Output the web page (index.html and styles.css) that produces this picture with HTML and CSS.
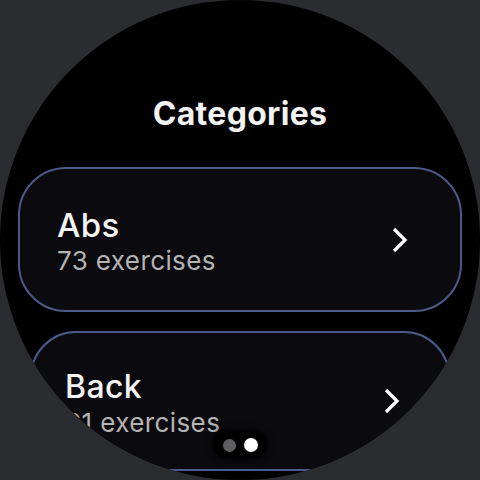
FILE: index.html
```html
<!DOCTYPE html>
<html>
<head>
<meta charset="utf-8">
<link rel="stylesheet" href="styles.css">
</head>
<body>
<div class="watch">
  <h1 class="title">Categories</h1>
  <div class="list">
    <div class="card card-main">
      <div class="text">
        <div class="name">Abs</div>
        <div class="count">73 exercises</div>
      </div>
      <svg class="chev" width="18" height="26" viewBox="0 0 18 26"><path d="M3 2 L14 13 L3 24" fill="none" stroke="#fff" stroke-width="3.2"/></svg>
    </div>
    <div class="card card-next">
      <div class="text">
        <div class="name">Back</div>
        <div class="count">61 exercises</div>
      </div>
      <svg class="chev" width="18" height="26" viewBox="0 0 18 26"><path d="M3 2 L14 13 L3 24" fill="none" stroke="#fff" stroke-width="3.2"/></svg>
    </div>
  </div>
  <div class="pager">
    <span class="dot"></span>
    <span class="dot active"></span>
  </div>
</div>
</body>
</html>
```

FILE: styles.css
```css
html, body {
  margin: 0;
  padding: 0;
  background: #2b2c30;
}
.watch {
  position: relative;
  width: 480px;
  height: 480px;
  border-radius: 50%;
  background: #000;
  overflow: hidden;
  font-family: Inter, "Noto Sans", sans-serif;
  color: #fff;
}
.title {
  margin: 0;
  padding-top: 94px;
  height: 40px;
  line-height: 40px;
  font-size: 32px;
  font-weight: 700;
  letter-spacing: 0.3px;
  text-align: center;
  color: #f2f2f2;
}
.list {
  display: flex;
  flex-direction: column;
  padding-top: 33px;
}
.card {
  box-sizing: border-box;
  display: flex;
  align-items: center;
  justify-content: space-between;
  border: 2px solid #4b5b88;
  background: #0b0b0f;
  border-radius: 48px;
}
.card-main {
  margin-left: 18px;
  width: 444px;
  height: 145px;
  padding: 0 51px 0 37px;
}
.card-next {
  margin-top: 19px;
  margin-left: 30px;
  width: 420px;
  height: 140px;
  border-radius: 46px;
  padding: 0 47px 0 33px;
}
.text {
  padding-top: 3px;
}
.name {
  font-size: 33px;
  line-height: 38px;
  font-weight: 500;
  letter-spacing: 0.4px;
  color: #f4f4f4;
}
.count {
  margin-top: 2px;
  font-size: 26px;
  line-height: 30px;
  letter-spacing: 0.4px;
  color: #b4b4b4;
}
.card-next .name {
  font-size: 32px;
}
.card-next .count {
  font-size: 26px;
}
.chev {
  display: block;
}
.pager {
  position: absolute;
  left: 214px;
  top: 432px;
  width: 52px;
  height: 26px;
  border-radius: 13px;
  background: #000;
  box-shadow: 0 0 6px 2px #000;
  display: flex;
  align-items: center;
  justify-content: center;
  gap: 8px;
}
.dot {
  width: 13px;
  height: 13px;
  border-radius: 50%;
  background: #5f5f62;
}
.dot.active {
  width: 14px;
  height: 14px;
  background: #fff;
}
```
